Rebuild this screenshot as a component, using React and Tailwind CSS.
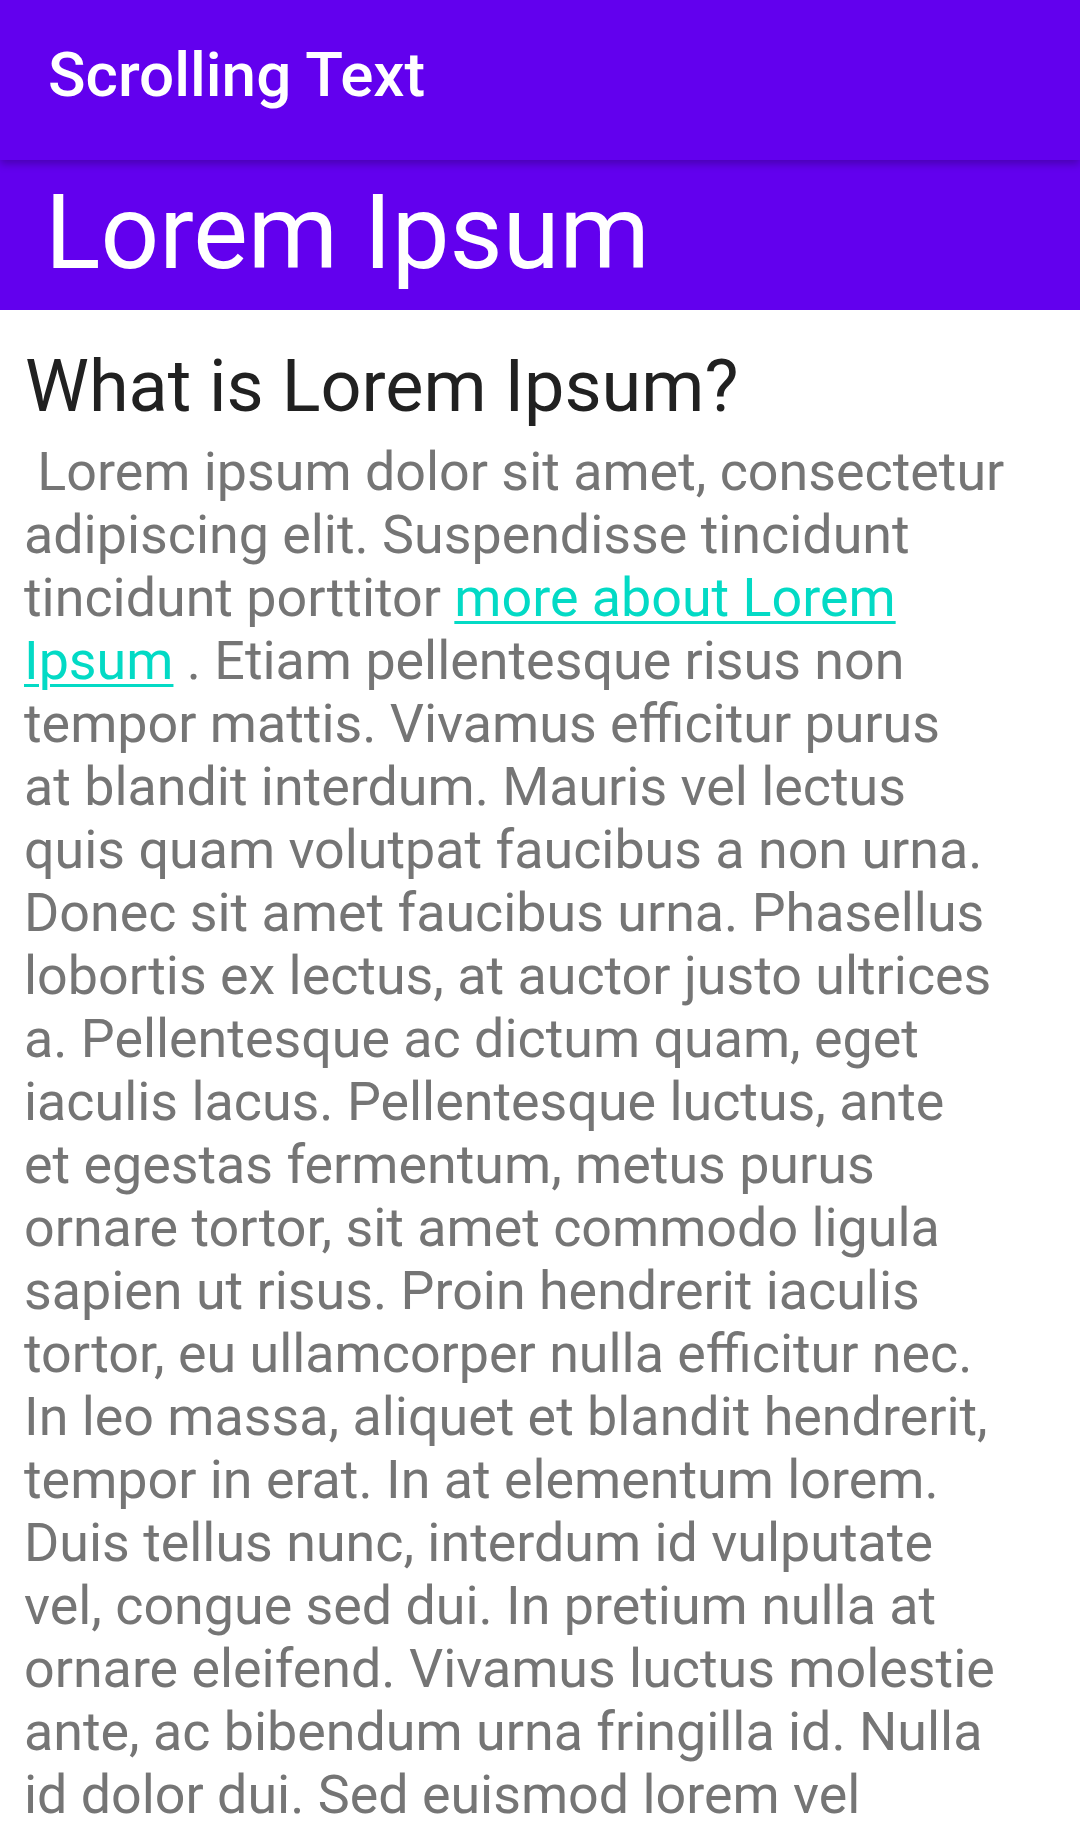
import React from "react";

const lines = [
  " Lorem ipsum dolor sit amet, consectetur",
  "adipiscing elit. Suspendisse tincidunt",
  null,
  null,
  "tempor mattis. Vivamus efficitur purus",
  "at blandit interdum. Mauris vel lectus",
  "quis quam volutpat faucibus a non urna.",
  "Donec sit amet faucibus urna. Phasellus",
  "lobortis ex lectus, at auctor justo ultrices",
  "a. Pellentesque ac dictum quam, eget",
  "iaculis lacus. Pellentesque luctus, ante",
  "et egestas fermentum, metus purus",
  "ornare tortor, sit amet commodo ligula",
  "sapien ut risus. Proin hendrerit iaculis",
  "tortor, eu ullamcorper nulla efficitur nec.",
  "In leo massa, aliquet et blandit hendrerit,",
  "tempor in erat. In at elementum lorem.",
  "Duis tellus nunc, interdum id vulputate",
  "vel, congue sed dui. In pretium nulla at",
  "ornare eleifend. Vivamus luctus molestie",
  "ante, ac bibendum urna fringilla id. Nulla",
  "id dolor dui. Sed euismod lorem vel",
];

export default function App() {
  return (
    <div
      className="w-[1080px] h-[1840px] overflow-hidden bg-white flex flex-col"
      style={{ fontFamily: "Roboto, 'Noto Sans', sans-serif" }}
    >
      <header className="relative z-10 h-[160px] shrink-0 bg-[#6200EE] pl-[48px] pt-[39px] shadow-[0_4px_8px_rgba(0,0,0,0.25)]">
        <h1 className="text-[62px] leading-[72px] font-medium text-white">Scrolling Text</h1>
      </header>
      <div className="h-[150px] shrink-0 bg-[#6200EE] pl-[45px] pt-[12px]">
        <h2 className="text-[103px] leading-[121px] font-normal text-white">Lorem Ipsum</h2>
      </div>
      <main className="pl-[25px] pt-[35px]">
        <h3 className="text-[72px] leading-[84px] text-[#212121]">What is Lorem Ipsum?</h3>
        <p className="-ml-[1px] mt-[11px] text-[53.8px] leading-[63px] text-[#757575] whitespace-pre">
          {lines.map((l, i) => {
            if (i === 2)
              return (
                <span key={i} className="block">
                  tincidunt porttitor{" "}
                  <a href="#" className="text-[#03DAC5] underline decoration-[3px] underline-offset-[5px]">
                    more about Lorem
                  </a>
                </span>
              );
            if (i === 3)
              return (
                <span key={i} className="block">
                  <a href="#" className="text-[#03DAC5] underline decoration-[3px] underline-offset-[5px]">
                    Ipsum
                  </a>{" "}
                  . Etiam pellentesque risus non
                </span>
              );
            return (
              <span key={i} className="block">
                {l}
              </span>
            );
          })}
        </p>
      </main>
    </div>
  );
}
